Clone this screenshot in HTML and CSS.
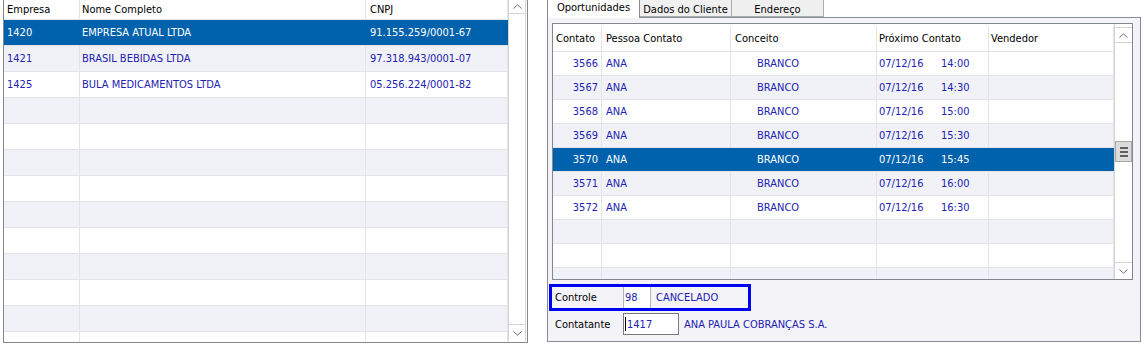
FILE: index.html
```html
<!DOCTYPE html>
<html lang="pt">
<head>
    <meta charset="UTF-8">
    <title>Oportunidades</title>
    <link rel="stylesheet" href="styles.css">
</head>
<body>
<div class="screen">
    <!-- grade de empresas -->
    <div class="grid-box empresas">
        <div class="table">
            <div class="row head"><span>Empresa</span><span>Nome Completo</span><span>CNPJ</span></div>
            <div class="row sel"><span>1420</span><span>EMPRESA ATUAL LTDA</span><span>91.155.259/0001-67</span></div>
            <div class="row alt"><span>1421</span><span>BRASIL BEBIDAS LTDA</span><span>97.318.943/0001-07</span></div>
            <div class="row"><span>1425</span><span>BULA MEDICAMENTOS LTDA</span><span>05.256.224/0001-82</span></div>
            <div class="row alt"><span></span><span></span><span></span></div>
            <div class="row"><span></span><span></span><span></span></div>
            <div class="row alt"><span></span><span></span><span></span></div>
            <div class="row"><span></span><span></span><span></span></div>
            <div class="row alt"><span></span><span></span><span></span></div>
            <div class="row"><span></span><span></span><span></span></div>
            <div class="row alt"><span></span><span></span><span></span></div>
            <div class="row"><span></span><span></span><span></span></div>
            <div class="row alt"><span></span><span></span><span></span></div>
            <div class="row"><span></span><span></span><span></span></div>
        </div>
        <div class="vscroll">
            <div class="sbtn up"><svg width="9" height="5" viewBox="0 0 9 5"><path d="M0.5 4.5 L4.5 0.8 L8.5 4.5" fill="none" stroke="#6d6d6d" stroke-width="1"/></svg></div>
            <div class="track"></div>
            <div class="sbtn down"><svg width="9" height="5" viewBox="0 0 9 5"><path d="M0.5 0.5 L4.5 4.2 L8.5 0.5" fill="none" stroke="#6d6d6d" stroke-width="1"/></svg></div>
        </div>
    </div>

    <!-- abas -->
    <div class="tabs-panel">
        <div class="tabs">
            <span class="tab active">Oportunidades</span>
            <span class="tab">Dados do Cliente</span>
            <span class="tab">Endereço</span>
        </div>
        <div class="page">
            <div class="grid-box contatos">
                <div class="table">
                    <div class="row head"><span>Contato</span><span>Pessoa Contato</span><span>Conceito</span><span>Próximo Contato</span><span>Vendedor</span></div>
                    <div class="row"><span class="num">3566</span><span>ANA</span><span class="conc">BRANCO</span><span><i>07/12/16</i>14:00</span><span></span></div>
                    <div class="row alt"><span class="num">3567</span><span>ANA</span><span class="conc">BRANCO</span><span><i>07/12/16</i>14:30</span><span></span></div>
                    <div class="row"><span class="num">3568</span><span>ANA</span><span class="conc">BRANCO</span><span><i>07/12/16</i>15:00</span><span></span></div>
                    <div class="row alt"><span class="num">3569</span><span>ANA</span><span class="conc">BRANCO</span><span><i>07/12/16</i>15:30</span><span></span></div>
                    <div class="row sel"><span class="num">3570</span><span>ANA</span><span class="conc">BRANCO</span><span><i>07/12/16</i>15:45</span><span></span></div>
                    <div class="row alt"><span class="num">3571</span><span>ANA</span><span class="conc">BRANCO</span><span><i>07/12/16</i>16:00</span><span></span></div>
                    <div class="row"><span class="num">3572</span><span>ANA</span><span class="conc">BRANCO</span><span><i>07/12/16</i>16:30</span><span></span></div>
                    <div class="row alt"><span></span><span></span><span></span><span></span><span></span></div>
                    <div class="row"><span></span><span></span><span></span><span></span><span></span></div>
                    <div class="row alt"><span></span><span></span><span></span><span></span><span></span></div>
                </div>
                <div class="vscroll">
                    <div class="sbtn up"><svg width="9" height="5" viewBox="0 0 9 5"><path d="M0.5 4.5 L4.5 0.8 L8.5 4.5" fill="none" stroke="#6d6d6d" stroke-width="1"/></svg></div>
                    <div class="thumb"><b></b><b></b><b></b></div>
                    <div class="track"></div>
                    <div class="sbtn down"><svg width="9" height="5" viewBox="0 0 9 5"><path d="M0.5 0.5 L4.5 4.2 L8.5 0.5" fill="none" stroke="#6d6d6d" stroke-width="1"/></svg></div>
                </div>
            </div>

            <div class="field marcado">
                <label>Controle</label>
                <span class="edit curto">98</span>
                <span class="desc">CANCELADO</span>
            </div>
            <div class="field">
                <label>Contatante</label>
                <span class="edit longo"><em></em>1417</span>
                <span class="desc">ANA PAULA COBRANÇAS S.A.</span>
            </div>
        </div>
    </div>
</div>
</body>
</html>
```

FILE: styles.css
```css
*{
    margin: 0;
    padding: 0;
    box-sizing: border-box;
}
body{
    width: 1148px;
    height: 351px;
    overflow: hidden;
    background: #fff;
    color: #000;
    font: 11px "DejaVu Sans Condensed", "Liberation Sans", sans-serif;
}
.screen{
    display: flex;
    align-items: flex-start;
    padding-left: 3px;
}

/* grades */
.grid-box{
    display: flex;
    border: 1px solid #828790;
    background: #fff;
    overflow: hidden;
}
.grid-box .table{
    display: flex;
    flex-direction: column;
    overflow: hidden;
}
.row{
    display: grid;
    flex: none;
    border-bottom: 1px solid #e3e3e8;
    color: #2121b3;
}
.row span{
    display: flex;
    align-items: center;
    padding-left: 3px;
    border-right: 1px solid #e3e3e8;
    white-space: nowrap;
    overflow: hidden;
}
.row.head{
    color: #000;
    background: #fff;
}
.row.alt{
    background: #f1f2f8;
}
.row.sel{
    background: #0062ad;
    color: #fff;
}
.row.sel span{
    border-right-color: #0062ad;
}

/* empresas */
.empresas{
    width: 525px;
    height: 343px;
    border-top: none;
}
.empresas .table{
    width: 505px;
}
.empresas .row{
    grid-template-columns: 76px 286px 1fr;
    height: 26px;
}
.empresas .row.head{
    height: 20px;
}
.empresas .row span:nth-child(2){
    padding-left: 2px;
}
.empresas .row span:nth-child(3){
    padding-left: 4px;
}

/* barra de rolagem */
.vscroll{
    width: 18px;
    display: flex;
    flex-direction: column;
    background: #fff;
    border-left: 1px solid #d4d4d4;
}
.empresas .vscroll{
    border-right: 1px solid #d4d4d4;
    margin-right: 1px;
    margin-bottom: 1px;
}
.sbtn{
    flex: none;
    display: flex;
    align-items: center;
    justify-content: center;
}
.empresas .sbtn.up{
    height: 14px;
    border-bottom: 1px solid #d4d4d4;
}
.sbtn.down{
    height: 17px;
    border-top: 1px solid #d4d4d4;
}
.track{
    flex: 1;
}
.thumb{
    flex: none;
    height: 21px;
    margin-top: 98px;
    background: #dcdcdc;
    border: 1px solid #a6a6a6;
    display: flex;
    flex-direction: column;
    align-items: center;
    justify-content: center;
    gap: 2px;
}
.thumb b{
    display: block;
    width: 8px;
    height: 2px;
    background: #606060;
}

/* abas */
.tabs-panel{
    margin-left: 19px;
    width: 594px;
    height: 342px;
    display: flex;
    flex-direction: column;
}
.tabs{
    display: flex;
    height: 17px;
    flex: none;
}
.tab{
    width: 92px;
    height: 17px;
    background: #f0f0f0;
    border: 1px solid #acacac;
    border-top: none;
    border-left: none;
    text-align: center;
    line-height: 17px;
    padding-top: 1px;
}
.tab.active{
    width: 93px;
    height: 18px;
    background: #fff;
    border-left: 1px solid #898c95;
    border-right: 1px solid #898c95;
    border-bottom: none;
    padding-top: 0;
    line-height: 15px;
    position: relative;
    z-index: 1;
}
.page{
    flex: 1;
    border: 1px solid #898c95;
    background: #f3f3f8;
}

/* contatos */
.contatos{
    width: 581px;
    height: 257px;
    margin: 5px 0 0 4px;
    padding-top: 2px;
}
.contatos .table{
    width: 561px;
}
.contatos .row{
    grid-template-columns: 49px 129px 146px 112px 1fr;
    height: 24px;
}
.contatos .row.head{
    height: 26px;
}
.contatos .row span.num{
    justify-content: flex-end;
    padding-right: 3px;
}
.contatos .row span:nth-child(2){
    padding-left: 4px;
}
.contatos .row span.conc{
    padding-left: 26px;
}
.contatos .row.head span:nth-child(3){
    padding-left: 4px;
}
.contatos .row span:nth-child(4){
    padding-left: 2px;
}
.contatos .row span:nth-child(5){
    padding-left: 2px;
}
.contatos .row i{
    font-style: normal;
    width: 62px;
}
.contatos .vscroll{
    margin-top: -2px;
}
.contatos .sbtn.up{
    height: 16px;
    margin-top: 3px;
    border-top: 1px solid #d4d4d4;
    border-bottom: 1px solid #d4d4d4;
}

/* campos */
.field{
    display: flex;
    align-items: stretch;
    height: 22px;
    margin-top: 2px;
    padding-left: 7px;
}
.field label{
    width: 68px;
    display: flex;
    align-items: center;
}
.field.marcado{
    width: 202px;
    height: 27px;
    margin: 4px 0 0 1px;
    padding-left: 3px;
    border: 3px solid #0000f0;
}
.edit{
    display: flex;
    align-items: center;
    background: #fff;
    color: #2121b3;
}
.edit.curto{
    width: 28px;
    padding-left: 1px;
    border-left: 1px solid #b4b4b4;
    border-right: 1px solid #b4b4b4;
}
.edit.longo{
    width: 56px;
    border: 1px solid #7a7a7a;
    padding-left: 1px;
}
.edit em{
    display: block;
    width: 1px;
    height: 14px;
    background: #000;
    margin-right: 1px;
}
.desc{
    display: flex;
    align-items: center;
    padding-left: 5px;
    color: #2121b3;
}
```
